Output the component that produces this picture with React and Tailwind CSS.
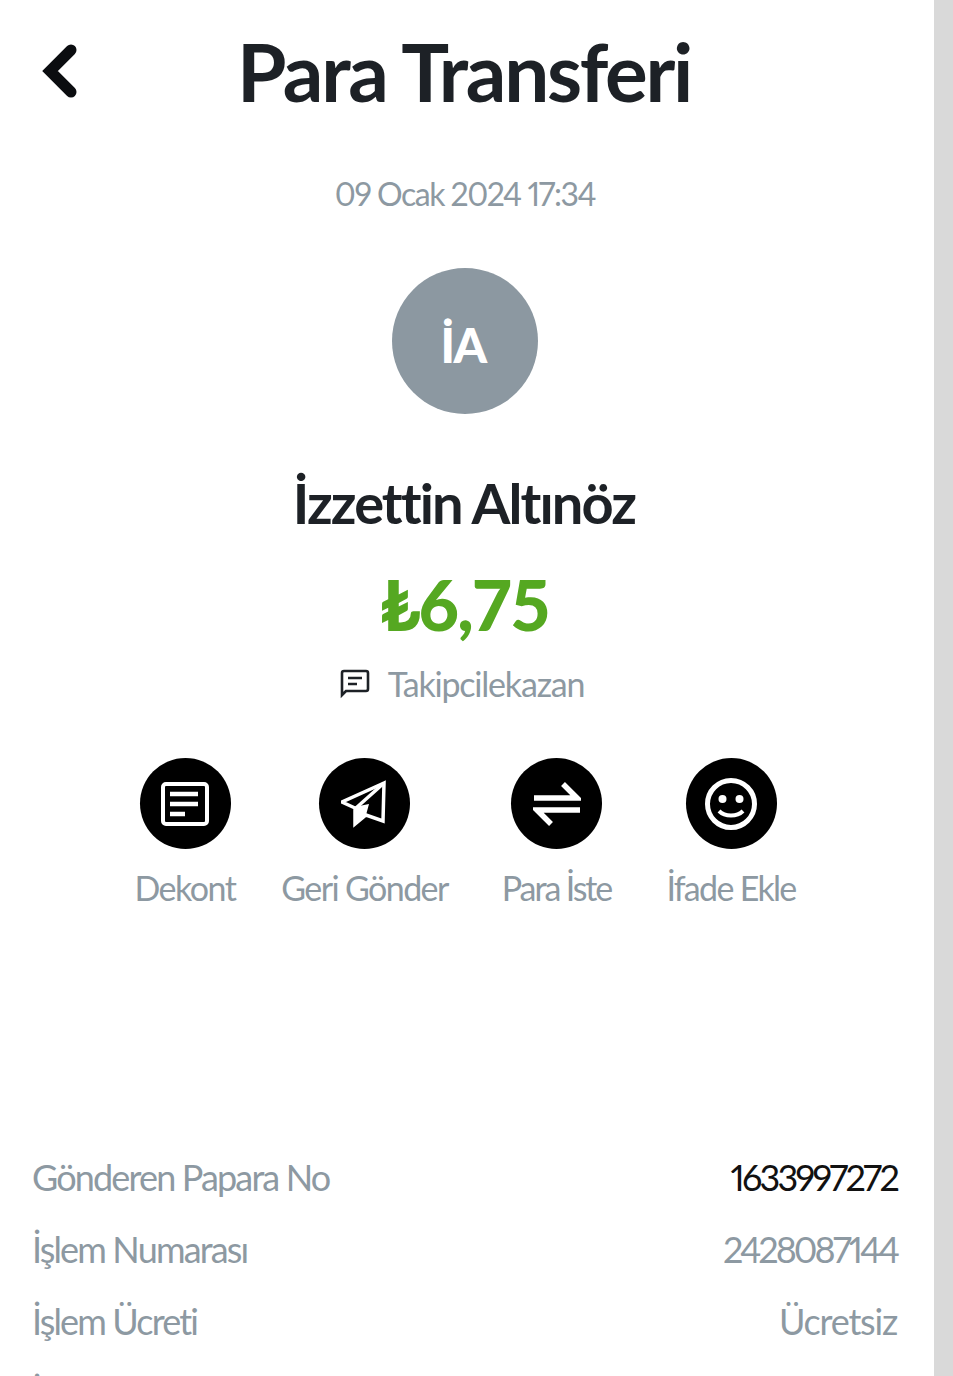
import React from 'react';

const BackIcon = () => (
  <svg width="36" height="54" viewBox="0 0 36 54" fill="none" stroke="#0b0d10" strokeWidth="11" strokeLinecap="round" strokeLinejoin="miter" className="shrink-0">
    <path d="M30 6 L9 27 L30 48" />
  </svg>
);

const DekontIcon = () => (
  <svg width="48" height="44" viewBox="0 0 48 44" fill="none" stroke="#fff" strokeWidth="4">
    <rect x="2" y="2" width="44" height="40" rx="3" />
    <path d="M9 12h28M9 22h28M9 32h15" strokeWidth="4.5" />
  </svg>
);

const SendIcon = () => (
  <svg width="48" height="48" viewBox="2 0 48 48" fill="none" stroke="#fff" strokeWidth="3.5" strokeLinejoin="miter">
    <path d="M45 3 L3 22 L16 28 L16 44 L27 35 L44 41 Z" />
    <path d="M45 3 L17 28" />
    <path d="M15 27 L30 24 L27 35 L15 46 Z" fill="#fff" stroke="none" />
  </svg>
);

const SwapIcon = () => (
  <svg width="48" height="46" viewBox="0 0 48 46" fill="none" stroke="#fff" strokeWidth="5.5">
    <path d="M1 17h43L30 3" />
    <path d="M47 29H4l14 14" />
  </svg>
);

const SmileIcon = () => (
  <svg width="52" height="52" viewBox="0 0 52 52" fill="none" stroke="#fff" strokeWidth="5">
    <circle cx="26" cy="26" r="23.5" />
    <circle cx="17.5" cy="21" r="4" fill="#fff" stroke="none" />
    <circle cx="34.5" cy="21" r="4" fill="#fff" stroke="none" />
    <path d="M14 33c6 6 18 6 24 0" strokeWidth="4" />
  </svg>
);

const actions = [
  { label: 'Dekont', icon: <DekontIcon />, cls: 'w-[100px]', labelCls: 'tracking-[-1.5px]' },
  { label: 'Geri Gönder', icon: <SendIcon />, cls: 'w-[167px] ml-[46px]', labelCls: 'tracking-[-1.6px]' },
  { label: 'Para İste', icon: <SwapIcon />, cls: 'w-[109px] ml-[54px]', labelCls: 'tracking-[-2.1px]' },
  { label: 'İfade Ekle', icon: <SmileIcon />, cls: 'w-[128px] ml-[56px]', labelCls: 'tracking-[-1.7px]' },
];

const rows = [
  { label: 'Gönderen Papara No', value: '1633997272', valueCls: 'text-[#111] proportional-nums tracking-[-2.8px]' },
  { label: 'İşlem Numarası', value: '2428087144', valueCls: 'proportional-nums tracking-[-3px]' },
  { label: 'İşlem Ücreti', value: 'Ücretsiz', valueCls: 'tracking-[-1.2px]' },
  { label: 'İşlem Tipi', value: '', valueCls: '' },
];

const App = () => {
  return (
    <div className="flex h-[1376px] overflow-hidden bg-white font-['Lato',sans-serif]">
      <div className="w-[934px] shrink-0">
        {/* Header */}
        <div className="flex h-[146px] items-center pb-[4px] pl-[41px]">
          <BackIcon />
          <h1 className="ml-[132px] w-[510px] text-center text-[80px] leading-none font-bold tracking-[-2.3px] whitespace-nowrap text-[#1d2126]">
            Para Transferi
          </h1>
        </div>

        <div className="flex flex-col items-center pr-[4px]">
          <div className="mt-[29px] text-[32px] leading-[38px] tracking-[-1.5px] proportional-nums text-[#8d99a2]">09 Ocak 2024 17:34</div>

          <div className="mt-[55px] flex h-[146px] w-[146px] items-center justify-center rounded-full bg-[#8c98a1] pt-[8px] pr-[4px] text-[48px] font-black tracking-[-1.5px] text-white">
            İA
          </div>

          <div className="mt-[54px] mr-[2px] text-[56px] leading-[70px] font-bold tracking-[-1.9px] text-[#1d2126]">İzzettin Altınöz</div>

          <div className="mt-[24px] mr-[1px] text-[70px] leading-[84px] font-black tracking-[-2px] text-[#55a821]">₺6,75</div>

          <div className="mt-[16px] mr-[6px] flex items-center">
            <svg width="30" height="30" viewBox="0 0 30 30" fill="none" stroke="#1d2126" strokeWidth="2.6">
              <path d="M2 26V4a2 2 0 0 1 2-2h22a2 2 0 0 1 2 2v16a2 2 0 0 1-2 2H6z" />
              <path d="M8 9h14M8 15h9" />
            </svg>
            <span className="ml-[18px] text-[34px] leading-[44px] tracking-[-1.2px] text-[#8d99a2]">Takipcilekazan</span>
          </div>

          {/* Actions */}
          <div className="mt-[52px] flex">
            {actions.map((item) => (
              <div key={item.label} className={`flex flex-col items-center ${item.cls}`}>
                <div className="flex h-[91px] w-[91px] items-center justify-center rounded-full bg-black">
                  {item.icon}
                </div>
                <span className={`mt-[17px] text-[34px] leading-[44px] whitespace-nowrap text-[#8d99a2] ${item.labelCls}`}>
                  {item.label}
                </span>
              </div>
            ))}
          </div>
        </div>

        {/* Details */}
        <div className="mt-[245px] flex flex-col gap-[28px] pr-[37px] pl-[32px]">
          {rows.map((row) => (
            <div key={row.label} className="flex h-[44px] items-center justify-between text-[36px] leading-[44px] tracking-[-1.85px] text-[#8d99a2]">
              <span>{row.label}</span>
              <span className={row.valueCls}>{row.value}</span>
            </div>
          ))}
        </div>
      </div>
      <div className="w-[19px] shrink-0 bg-[#d9d9d9]" />
    </div>
  );
};

export default App;
